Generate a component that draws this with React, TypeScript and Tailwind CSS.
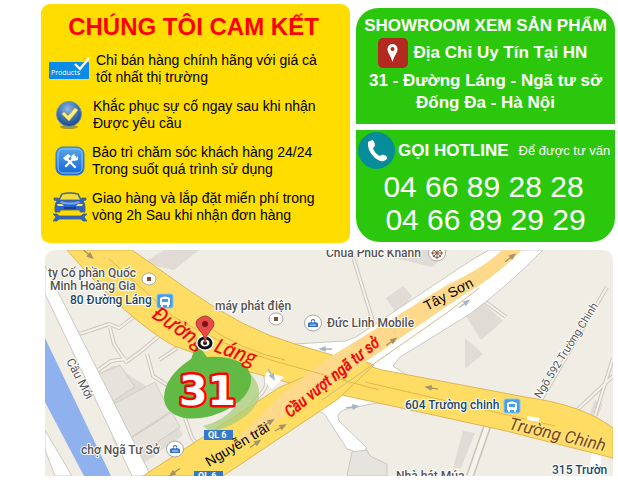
import type { ReactNode } from "react";

function ProductsIcon() {
  return (
    <svg viewBox="0 0 41 24" className="h-6 w-[41px]" aria-hidden="true">
      <rect x="0" y="5" width="40" height="17" rx="1" fill="#0a8be8" />
      <text x="2" y="18" fontSize="7" fill="#fff" fontFamily="Open Sans, sans-serif">Products</text>
      <path d="M26 7 31 12 40 1" fill="none" stroke="#fff" strokeWidth="2.4" />
    </svg>
  );
}

function CheckIcon() {
  return (
    <svg viewBox="0 0 28 30" className="h-[30px] w-7" aria-hidden="true">
      <defs>
        <radialGradient id="ball" cx="0.45" cy="0.3" r="0.75">
          <stop offset="0" stopColor="#8db8e4" />
          <stop offset="0.55" stopColor="#3a70b6" />
          <stop offset="1" stopColor="#173d7c" />
        </radialGradient>
      </defs>
      <ellipse cx="14" cy="27" rx="9" ry="2" fill="#a99b20" />
      <circle cx="14" cy="14" r="12.5" fill="url(#ball)" stroke="#6e93ae" />
      <path d="m7 14 2-2 4 4 7-8 3 2-9 11Z" fill="#fff078" stroke="#e1bd3c" strokeWidth=".6" />
    </svg>
  );
}

function ToolsIcon() {
  return (
    <svg viewBox="0 0 30 30" className="h-[30px] w-[30px]" aria-hidden="true">
      <defs>
        <linearGradient id="tile" x2="0" y2="1">
          <stop stopColor="#5aa7ee" />
          <stop offset="1" stopColor="#1166d4" />
        </linearGradient>
      </defs>
      <rect x="1" y="1" width="28" height="28" rx="7" fill="url(#tile)" stroke="#3976b8" />
      <rect x="3" y="3" width="24" height="24" rx="5" fill="none" stroke="#8cc3f7" />
      <path d="m11 12 9 9M20 11l-9 9" stroke="#fff" strokeWidth="2.4" strokeLinecap="round" />
      <path d="m8 12 5-4 3 2-5 5ZM17 9l3-1-1 3 2 1 2-2v4l-4 1-3-3Z" fill="#fff" />
    </svg>
  );
}

function CarIcon() {
  return (
    <svg viewBox="0 0 36 30" className="h-[30px] w-9" aria-hidden="true">
      <path d="M7 8 10 2q8-2 16 0l3 6" fill="#f4dd40" stroke="#4a6580" strokeWidth="1.6" />
      <path d="M2 6h4l2 2h20l2-2h4v2l-3 1q2 2 2 6v5h-5v-2H8v2H3v-5q0-4 2-6L2 8Z" fill="#2c64ca" stroke="#4b5f70" strokeWidth=".8" />
      <path d="M9 9q9 3 18 0l1 2q-10 3-20 0Z" fill="#78a5eb" />
      <path d="M5 12h5l2 2H6ZM31 12h-5l-2 2h6Z" fill="#ffe45a" />
      <path d="M12 15h12v2H12Z" fill="#173f91" />
      <path d="M1 22h4l2 2h22l2-2h4l-3 3 3 4h-4l-2-2H7l-2 2H1l3-4Z" fill="#2c64ca" stroke="#4b5f70" strokeWidth=".8" />
    </svg>
  );
}

function Promise({ icon, children }: { icon: ReactNode; children: ReactNode }) {
  return (
    <li className="flex items-center">
      {icon}
      <p className="whitespace-nowrap">{children}</p>
    </li>
  );
}

function Commitments() {
  return (
    <section className="rounded-[9px] bg-[#ffdd00] pt-2 pr-3 pb-[19px] pl-2">
      <h1 className="text-center text-2xl leading-[30px] font-bold whitespace-nowrap text-[#ff0000]">
        CHÚNG TÔI CAM KẾT
      </h1>
      <ul className="mt-2.5 flex flex-col gap-3 text-sm leading-[17px] text-black">
        <Promise icon={<span className="w-[47px] shrink-0"><ProductsIcon /></span>}>
          Chỉ bán hàng chính hãng với giá cả<br />tốt nhất thị trường
        </Promise>
        <Promise icon={<span className="w-11 shrink-0 pl-1.5"><CheckIcon /></span>}>
          Khắc phục sự cố ngay sau khi nhận<br />Được yêu cầu
        </Promise>
        <Promise icon={<span className="w-[43px] shrink-0 pl-1.5"><ToolsIcon /></span>}>
          Bảo trì chăm sóc khách hàng 24/24<br />Trong suốt quá trình sử dụng
        </Promise>
        <Promise icon={<span className="w-[43px] shrink-0 pl-[3px]"><CarIcon /></span>}>
          Giao hàng và lắp đặt miến phí trong<br />vòng 2h Sau khi nhận đơn hàng
        </Promise>
      </ul>
    </section>
  );
}

function Showroom() {
  return (
    <section className="flex flex-col items-center rounded-t-[22px] bg-[#2bc70d] pt-2 pb-2.5 text-[17px] font-bold whitespace-nowrap text-white">
      <h2 className="leading-5">SHOWROOM XEM SẢN PHẨM</h2>
      <div className="mt-0.5 flex items-center gap-1.5 pr-1.5">
        <svg viewBox="0 0 30 30" className="h-[30px] w-[30px]" aria-hidden="true">
          <rect width="30" height="30" rx="5" fill="#b32a20" />
          <path d="M14.500 24 C13 18 9.500 15 9.500 11a5 5 0 0 1 10 0c0 4-3.500 7-5 13Z" fill="#fff" />
          <circle cx="14.500" cy="11" r="2" fill="#b32a20" />
        </svg>
        <span>Địa Chỉ Uy Tín Tại HN</span>
      </div>
      <address className="mt-0.5 text-center leading-[22px] not-italic">
        31 - Đường Láng - Ngã tư sở<br />Đống Đa - Hà Nội
      </address>
    </section>
  );
}

function Hotline() {
  return (
    <section className="flex-1 rounded-b-[24px] bg-[#2bc70d] px-0.5 pt-0.5 whitespace-nowrap text-white">
      <div className="flex items-center">
        <svg viewBox="0 0 38 38" className="h-[38px] w-[38px] shrink-0" aria-hidden="true">
          <circle cx="18.500" cy="18.500" r="18.500" fill="#078c99" />
          <path d="m10 10 4-2q2 0 3 5 0 2-2 3 2 6 7 8 2-2 4-1 4 1 3 4l-3 2q-5 1-10-4-7-7-6-15Z" fill="#fff" />
        </svg>
        <h2 className="ml-0.5 text-[17px] font-bold">GỌI HOTLINE</h2>
        <span className="ml-2.5 text-[13px]">Để được tư vấn</span>
      </div>
      <div className="flex flex-col items-center pr-1 text-3xl leading-[33px]">
        <a href="tel:0466892828">04 66 89 28 28</a>
        <a href="tel:0466892929" className="ml-1">04 66 89 29 29</a>
      </div>
    </section>
  );
}

function Arrow({ x, y, angle, color = "#a59465" }: { x: number; y: number; angle: number; color?: string }) {
  return (
    <path
      d="M-6 0H2M1-2 6 0 1 2Z"
      fill={color}
      stroke={color}
      strokeWidth="1.3"
      transform={`translate(${x} ${y}) rotate(${angle})`}
    />
  );
}

function BusStop({ x, y }: { x: number; y: number }) {
  return (
    <g transform={`translate(${x} ${y})`}>
      <rect width="16" height="14" rx="2" fill="#459de9" stroke="#8ac4f2" />
      <path d="M3 4q5-3 10 0v7h-1v2h-2v-2H6v2H4v-2H3Z" fill="#fff" />
      <path d="M5 5h6v3H5Z" fill="#459de9" />
    </g>
  );
}

function Place({ x, y, kind }: { x: number; y: number; kind: "square" | "shop" | "temple" }) {
  return (
    <g transform={`translate(${x} ${y})`}>
      <ellipse rx={kind === "square" ? 7 : 8.500} ry={kind === "square" ? 6 : 8} fill="#fff" stroke="#aaa8a4" />
      {kind === "square" && <rect x="-2" y="-2" width="4" height="4" fill="#805035" />}
      {kind === "shop" && (
        <>
          <path d="M-5 0-2-1V-3q2-2 4 0v2l3 1v4H-5Z" fill="#3674c9" />
          <path d="M-1-1v-1q1-1 2 0v1ZM-3 2h6" fill="#fff" stroke="#fff" strokeWidth=".8" />
        </>
      )}
      {kind === "temple" && (
        <g fill="none" stroke="#80583e">
          <circle r="4.500" />
          <path d="M-6 0H6M0-6V6M-4-4 4 4M4-4-4 4" />
        </g>
      )}
    </g>
  );
}

function StreetMap() {
  return (
    <svg viewBox="45 250 568 226" className="block w-full rounded-t-[10px]" role="img" aria-label="Bản đồ 31 Đường Láng">
      <rect x="45" y="250" width="568" height="226" fill="#f0ede5" />

      <g fill="#e0dcd5">
        <path d="m143 263 21-13h35l-25 20ZM400 250h48l-15 17-35-8ZM386 298l17-12 9 10-14 20ZM465 315l18-12 20 18-22 19ZM465 338l18 16-18 15ZM338 399l13-4 20 8-26 6ZM475 433l-14 35h-8l10-37ZM595 400l8 4-8 18-7-4Z" />
        <path d="m94 377 20-12 50 33 19 37-50 36-20-30-8-35Z" />
      </g>
      <g fill="#e6e3dd" stroke="#d1cdc5">
        <path d="m96 375 24-10 15 22-32 20ZM104 409l51-27 15 30-42 27ZM128 440l44-28 8 15-44 29Z" />
      </g>

      <path d="M45 338 111 476H84L45 402Z" fill="#8fb1ed" />
      <g fill="none" stroke="#cbc6bc" strokeWidth="4" strokeLinejoin="round">
        <path d="m65 335 18-2 26-9 10 4 20-15 20-10M110 328l4 16 12 18 14-10 26-22M147 354l6 22 14 9M159 360l18-12M99 388l-5-15 17-12 15-2M185 418l7 20 6 7M263 372q8 12-3 23l-10 11" />
        <path d="m353 257 20 64M484 301l22 16M607 287l-66 113M613 376l-40 38M613 358l-20 64" />
      </g>
      <g fill="none" stroke="#f5f2eb" strokeWidth="2">
        <path d="m65 335 18-2 26-9 10 4 20-15 20-10M110 328l4 16 12 18 14-10 26-22M147 354l6 22 14 9M159 360l18-12M99 388l-5-15 17-12 15-2M185 418l7 20 6 7M263 372q8 12-3 23l-10 11M353 257l20 64M484 301l22 16M607 287l-66 113M613 376l-40 38M613 358l-20 64" />
      </g>
      <path d="M45 266 151 476h-19L45 294ZM45 430 72 476H55L45 450Z" fill="#fff" stroke="#ccc8c0" />
      <path d="m295 344 50-3q10-2 20-10l105-70 19-11h54q-40 40-73 64l-70 43-7 9 15 10-50 18 35 6-42 8q-17 3-12 13l28 27-5 6-15-5-20-31q-1-5-13-8Z" fill="#fff" stroke="#ccc8c0" />
      <path d="m352 452 15-2 3 6 17 8v12h-40Z" fill="#e6e4de" stroke="#ccc8c0" />

      <path d="M487 427 470 476" stroke="#c8c3b8" strokeWidth="8" />
      <path d="M487 427 470 476" stroke="#f6f3ec" strokeWidth="5" />
      <path d="M593 445h10l-4 31h-11Z" fill="#fff" />
      <path d="M67 250h65l58 41q55 39 105 53l87 26 143 27q58 8 88 31v30l-111-28-160-35-52-12-47-13-69-24q-48-27-107-96Z" fill="#ffdd65" stroke="#dfb554" />
      <path d="m143 476 137-89 48-20 33-7 13 5-36 34-115 77Z" fill="#ffdc62" stroke="#dfb554" />
      <path d="m266 372 18 5-12 12-7-7Z" fill="#fff" />
      <path d="m285 391 45-34 117-72q38-18 55-35h20q-28 28-57 44l-91 62-49 34-15 7-62 45-17 3Z" fill="#ffd98b" />
      <path d="m108 258 66 59q49 29 100 44l105 29M365 382l190 44M205 325q38 26 80 35" fill="none" stroke="#e6b54e" />
      <path d="m322 400 126-88 31-24" fill="none" stroke="#d4b88a" />
      <path d="m527 418 12 2" stroke="#fff" strokeWidth="4" />

      <Arrow x={88} y={254} angle={42} />
      <Arrow x={510} y={258} angle={-38} />
      <Arrow x={391} y={342} angle={-36} />
      <Arrow x={432} y={388} angle={190} />
      <Arrow x={352} y={407} angle={-8} color="#a7b6bf" />
      <Arrow x={326} y={349} angle={180} color="#a7b6bf" />
      <Arrow x={464} y={304} angle={-35} color="#a7b6bf" />
      <Arrow x={271} y={374} angle={60} color="#a7b6bf" />
      <Arrow x={175} y={472} angle={145} />
      <Arrow x={255} y={444} angle={-35} />
      <Arrow x={280} y={428} angle={-30} />
      <Arrow x={268} y={423} angle={-30} />

      <path d="m250 373q20 22-3 42-21 16-38 16l-6-5q38-9 47-53Z" fill="#a9ce79" opacity=".75" />
      <path d="m191 359 6-16 10 14q38-2 44 19 2 17-19 31-24 14-48 11-20-5-20-21 1-21 27-38Z" fill="#62b944" />

      <g fontFamily="Roboto, sans-serif" fill="#555350" stroke="#fff" strokeWidth="2" strokeLinejoin="round" paintOrder="stroke" fontSize="12" fontWeight="500">
        <text x="48" y="277">ty Cố phần Quốc</text>
        <text x="50" y="290">Minh Hoàng Gia</text>
        <text x="215" y="310">máy phát điện</text>
        <text x="326" y="257">Chùa Phúc Khánh</text>
        <text x="327" y="327">Đức Linh Mobile</text>
        <text x="81" y="454">chợ Ngã Tư Sở</text>
        <text x="396" y="480">Nhà hát Múa</text>
        <text transform="translate(66 361) rotate(62)" fontWeight="400">Cầu Mới</text>
        <text transform="translate(540 399) rotate(-58)" fontSize="11" fontWeight="400">Ngõ 592 Trường Chinh</text>
        <g fill="#204967">
          <text x="70" y="304">80 Đường Láng</text>
          <text x="405" y="409">604 Trường chinh</text>
          <text x="552" y="474">315 Trườn</text>
        </g>
      </g>
      <text transform="translate(508 429) rotate(13)" fontFamily="Roboto, sans-serif" fontSize="17" fontStyle="italic" fill="#774516" stroke="#ffe58d" strokeWidth="2" paintOrder="stroke">Trường Chinh</text>
      <BusStop x={157} y={294} />
      <BusStop x={504} y={399} />
      <Place x={149} y={279} kind="square" />
      <Place x={276} y={319} kind="square" />
      <Place x={313} y={323} kind="shop" />
      <Place x={175} y={449} kind="shop" />
      <Place x={437} y={253} kind="temple" />

      <g fontFamily="Roboto, sans-serif" fontSize="9" fontWeight="700" fill="#fff">
        <path d="M204 430h29v10h-29ZM194 471h29v10h-29Z" fill="#3478c9" />
        <text x="208" y="438">QL 6</text>
        <text x="198" y="479">QL 6</text>
      </g>
      <g fontFamily="Liberation Sans, sans-serif" fontSize="14" fill="#000">
        <text transform="translate(427 311) rotate(-28)">Tây Sơn</text>
        <text transform="translate(209 467) rotate(-31)">Nguyễn trãi</text>
      </g>
      <g fontFamily="Open Sans, sans-serif" fontSize="20" fontStyle="italic" fill="#f00000" stroke="#f00000" strokeWidth=".3">
        <text transform="translate(151 317) rotate(34)">Đường</text>
        <text transform="translate(213 351) rotate(20)">Láng</text>
      </g>
      <text transform="translate(290 418) rotate(-39)" fontFamily="Roboto Condensed, Open Sans Condensed, Liberation Sans, sans-serif" fontSize="16" fontStyle="italic" fill="#f00000" stroke="#f00000" strokeWidth=".5">Cầu vượt ngã tư sở</text>
      <ellipse cx="205" cy="343" rx="6" ry="5" fill="none" stroke="#fff" strokeWidth="6" />
      <ellipse cx="205" cy="343" rx="6" ry="5" fill="#fff" stroke="#111" strokeWidth="3" />
      <circle cx="205" cy="343" r="2" fill="#111" />
      <path d="M205 343q-1-9-5-12-8-9 0-13 5-4 10 0 8 5 0 13-4 4-5 12Z" fill="#e84b49" stroke="#a53d39" />
      <circle cx="205" cy="324" r="3" fill="#7b1518" />
      <text x="179" y="405" fontFamily="DejaVu Sans, sans-serif" fontSize="41" fontWeight="700" fill="#fff" stroke="#f00" strokeWidth="5" strokeLinejoin="round" paintOrder="stroke">31</text>
    </svg>
  );
}

export default function App() {
  return (
    <main className="bg-white pt-1 pb-1.5 font-['Liberation_Sans',Arial,sans-serif]">
      <div className="grid grid-cols-[309fr_259fr] gap-1.5 pr-[3px] pl-[41px]">
        <Commitments />
        <div className="mt-1 mb-px flex flex-col gap-1.5">
          <Showroom />
          <Hotline />
        </div>
      </div>
      <div className="mt-[7px] pr-[5px] pl-[45px]">
        <StreetMap />
      </div>
    </main>
  );
}
